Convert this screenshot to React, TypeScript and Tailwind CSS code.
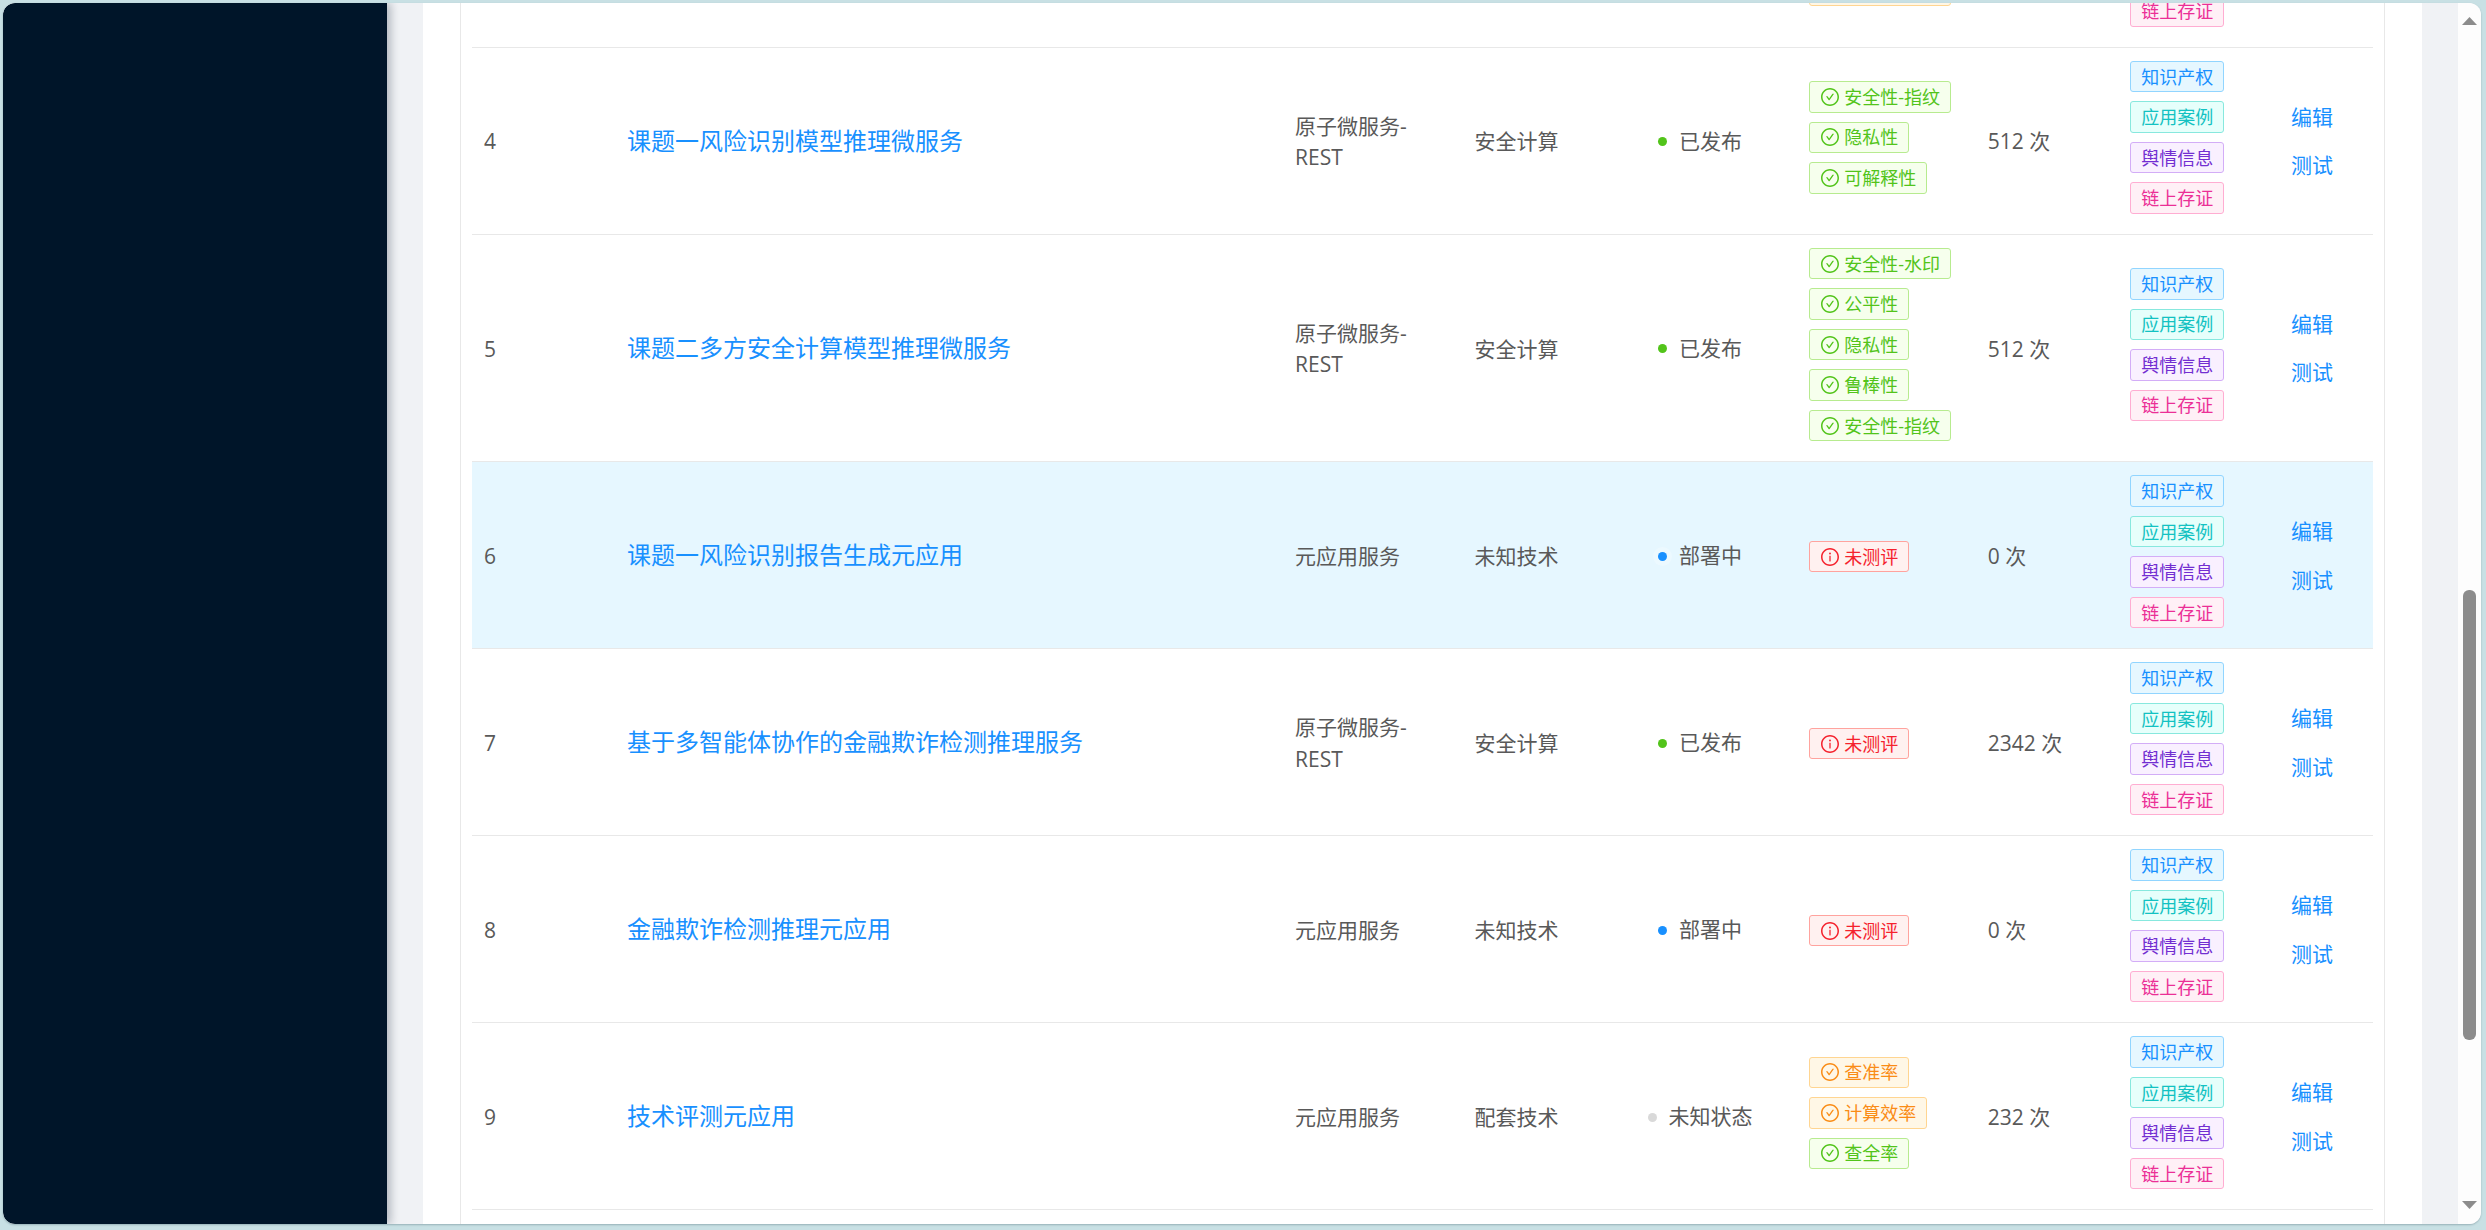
import React from 'react';

type Tone = 'green' | 'orange' | 'red';
type Tag = { text: string; tone: Tone };
type RowData = {
  no: string;
  title: string;
  type: string;
  tech: string;
  status: string;
  dot: 'green' | 'blue' | 'gray';
  tags: Tag[];
  count: string;
  selected?: boolean;
  tall?: boolean;
};

const tones: Record<Tone, string> = {
  green: 'bg-[#f6ffed] border-[#b7eb8f] text-[#52c41a]',
  orange: 'bg-[#fff7e6] border-[#ffd591] text-[#fa8c16]',
  red: 'bg-[#fff1f0] border-[#ffa39e] text-[#f5222d]',
};

const circle =
  'M512 64C264.6 64 64 264.6 64 512s200.6 448 448 448 448-200.6 448-448S759.4 64 512 64zm0 820c-205.4 0-372-166.6-372-372s166.6-372 372-372 372 166.6 372 372-166.6 372-372 372z';
const check =
  'M699 353h-46.9c-10.2 0-19.9 4.9-25.9 13.3L469 584.3l-71.2-98.8c-6-8.3-15.6-13.3-25.9-13.3H325c-6.5 0-10.3 7.4-6.5 12.7l124.6 172.8a31.8 31.8 0 0 0 51.7 0l210.6-292c3.9-5.3.1-12.7-6.4-12.7z';
const info =
  'M464 336a48 48 0 1 0 96 0 48 48 0 1 0-96 0zm72 112h-48c-4.4 0-8 3.6-8 8v272c0 4.4 3.6 8 8 8h48c4.4 0 8-3.6 8-8V456c0-4.4-3.6-8-8-8z';

function StatusIcon({ tone }: { tone: Tone }) {
  return (
    <svg viewBox="64 64 896 896" className="w-[18px] h-[18px] shrink-0" fill="currentColor">
      <path d={tone === 'red' ? info : check} />
      <path d={circle} />
    </svg>
  );
}

function StatusTag({ tag }: { tag: Tag }) {
  return (
    <span
      className={`inline-flex items-center w-fit h-[31.5px] pl-[11px] pr-[10px] gap-[5px] border rounded-[3px] text-[18px] leading-[30px] whitespace-nowrap ${tones[tag.tone]}`}
    >
      <StatusIcon tone={tag.tone} />
      {tag.text}
    </span>
  );
}

const chips = [
  { text: '知识产权', cls: 'bg-[#e6f7ff] border-[#91d5ff] text-[#1890ff]' },
  { text: '应用案例', cls: 'bg-[#e6fffb] border-[#87e8de] text-[#13c2c2]' },
  { text: '舆情信息', cls: 'bg-[#f9f0ff] border-[#d3adf7] text-[#722ed1]' },
  { text: '链上存证', cls: 'bg-[#fff0f6] border-[#ffadd2] text-[#eb2f96]' },
];

const chipBox =
  'flex items-center justify-center w-[94.5px] h-[31.5px] border rounded-[3px] text-[18px] leading-[30px] whitespace-nowrap';

const cols = 'grid grid-cols-[143px_668px_179.5px_145.5px_189.3px_178.5px_142.2px_161px_1fr]';

function Row({ r }: { r: RowData }) {
  const dotCls =
    r.dot === 'green'
      ? 'bg-[#52c41a]'
      : r.dot === 'blue'
        ? 'bg-[#1890ff] shadow-[0_0_0_5px_rgba(255,255,255,0.25)]'
        : 'bg-[#d9d9d9]';
  return (
    <div
      className={`${cols} items-center pl-[12px] border-b border-[#e8e8e8] text-[21px] leading-[31.5px] text-[#595959] shrink-0 ${
        r.tall ? 'h-[227.5px]' : 'h-[187px]'
      } ${r.selected ? 'bg-[#e6f7ff]' : 'bg-white'}`}
    >
      <div className="pt-[3px]">{r.no}</div>
      <div className="text-[24px] leading-[36px] text-[#1890ff]">{r.title}</div>
      <div className="w-[150px] pt-[3px]">{r.type}</div>
      <div className="pt-[3px]">{r.tech}</div>
      <div className="flex items-center justify-center gap-[12px] pr-[29.3px] pt-[2px]">
        <span className={`w-[9px] h-[9px] rounded-full ${dotCls}`} />
        <span>{r.status}</span>
      </div>
      <div className={`flex flex-col gap-[9px] ${r.tags.length === 1 ? 'pt-[3px]' : 'pb-[6.5px]'}`}>
        {r.tags.map((t, i) => (
          <StatusTag key={i} tag={t} />
        ))}
      </div>
      <div className="pt-[3px]">{r.count}</div>
      <div className="flex flex-col gap-[9px] pb-[6.5px]">
        {chips.map((c) => (
          <span key={c.text} className={`${chipBox} ${c.cls}`}>
            {c.text}
          </span>
        ))}
      </div>
      <div className="flex flex-col gap-[17px] text-[#1890ff] pt-[2px]">
        <span>编辑</span>
        <span>测试</span>
      </div>
    </div>
  );
}

const g = (text: string): Tag => ({ text, tone: 'green' });
const unrated: Tag[] = [{ text: '未测评', tone: 'red' }];

const rows: RowData[] = [
  {
    no: '4', title: '课题一风险识别模型推理微服务', type: '原子微服务-REST', tech: '安全计算',
    status: '已发布', dot: 'green', count: '512 次',
    tags: [g('安全性-指纹'), g('隐私性'), g('可解释性')],
  },
  {
    no: '5', title: '课题二多方安全计算模型推理微服务', type: '原子微服务-REST', tech: '安全计算',
    status: '已发布', dot: 'green', count: '512 次', tall: true,
    tags: [g('安全性-水印'), g('公平性'), g('隐私性'), g('鲁棒性'), g('安全性-指纹')],
  },
  {
    no: '6', title: '课题一风险识别报告生成元应用', type: '元应用服务', tech: '未知技术',
    status: '部署中', dot: 'blue', count: '0 次', selected: true, tags: unrated,
  },
  {
    no: '7', title: '基于多智能体协作的金融欺诈检测推理服务', type: '原子微服务-REST', tech: '安全计算',
    status: '已发布', dot: 'green', count: '2342 次', tags: unrated,
  },
  {
    no: '8', title: '金融欺诈检测推理元应用', type: '元应用服务', tech: '未知技术',
    status: '部署中', dot: 'blue', count: '0 次', tags: unrated,
  },
  {
    no: '9', title: '技术评测元应用', type: '元应用服务', tech: '配套技术',
    status: '未知状态', dot: 'gray', count: '232 次',
    tags: [
      { text: '查准率', tone: 'orange' },
      { text: '计算效率', tone: 'orange' },
      g('查全率'),
    ],
  },
];

export default function App() {
  return (
    <div
      className="w-full h-[1230px] overflow-hidden bg-[#c8e0e4] pl-[3px] pr-[5px] pt-[3px] pb-[6px]"
      style={{ fontFamily: '"Open Sans","Noto Sans CJK SC",sans-serif' }}
    >
      <div className="flex h-full rounded-[12px] overflow-hidden shadow-[0_1px_2px_rgba(0,40,50,0.25)] bg-[#f0f2f5]">
        <aside className="relative z-10 w-[384px] shrink-0 bg-[#001529] rounded-l-[12px] shadow-[4px_0_8px_rgba(0,21,41,0.25)]" />
        <main className="flex-1 min-w-0 pl-[36px] pr-[36px] overflow-hidden">
          <div className="h-full bg-white px-[37px] overflow-hidden">
            <div className="h-full border-x border-[#e8e8e8] px-[11px] overflow-hidden flex flex-col">
              {/* row 3: only its lower end is scrolled into view */}
              <div className={`${cols} grid-rows-[43.5px] items-end pl-[12px] h-[44.5px] shrink-0 overflow-hidden border-b border-[#e8e8e8]`}>
                <div className="col-start-6 w-[142px] h-[31.5px] mb-[40.5px] shrink-0 border rounded-[3px] bg-[#fff7e6] border-[#ffd591]" />
                <div className="col-start-8 mb-[20px] text-[18px]">
                  <span className={`${chipBox} ${chips[3].cls}`}>{chips[3].text}</span>
                </div>
              </div>
              {rows.map((r, i) => (
                <Row key={i} r={r} />
              ))}
              {/* row 10: only the top edge of its first tag is in view */}
              <div className={`${cols} pl-[12px] pt-[14px]`}>
                <div className={`col-start-8 ${chipBox} ${chips[0].cls}`} />
              </div>
            </div>
          </div>
        </main>
        <div className="w-[23px] shrink-0 bg-[#fdfdfd] flex flex-col items-center pt-[14px] pb-[15px]">
          <svg viewBox="0 0 15 8" className="w-[15px] h-[8px] shrink-0" fill="#8c8c8c">
            <polygon points="7.5,0 15,8 0,8" />
          </svg>
          <div className="w-[13px] h-[450px] mt-[565px] rounded-[6px] bg-[#8c8c8c] shrink-0" />
          <svg viewBox="0 0 15 8" className="w-[15px] h-[8px] shrink-0 mt-auto" fill="#8c8c8c">
            <polygon points="0,0 15,0 7.5,8" />
          </svg>
        </div>
      </div>
    </div>
  );
}
